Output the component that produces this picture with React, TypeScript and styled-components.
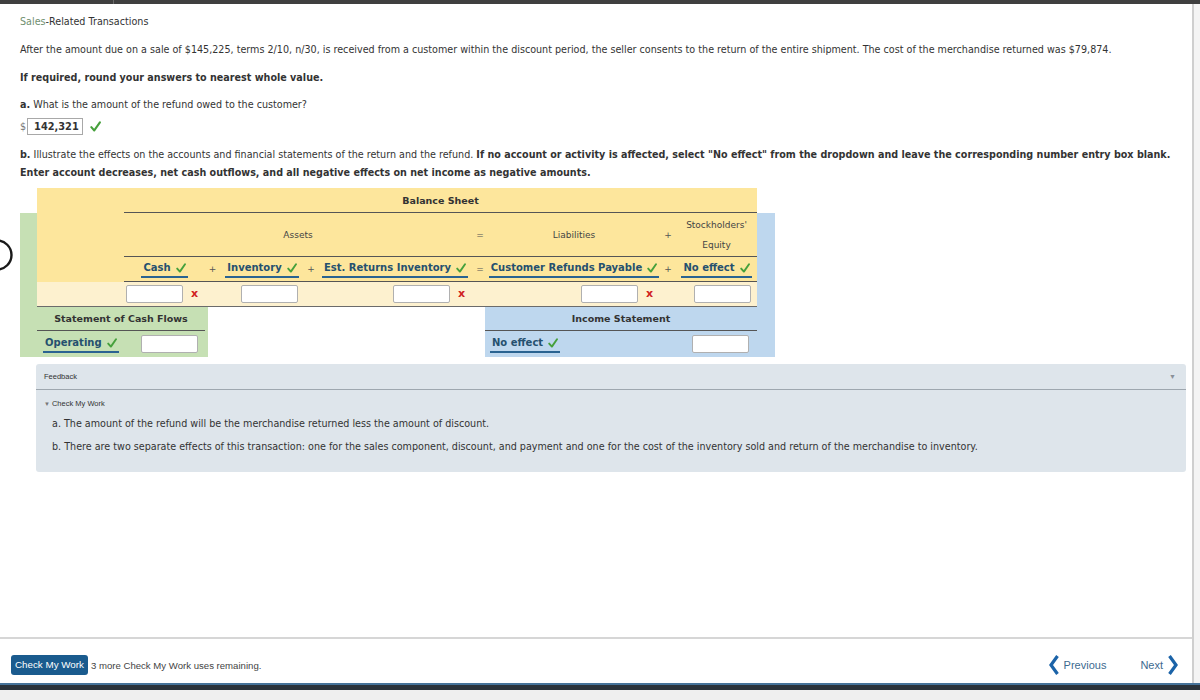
import React from 'react';
import styled, { createGlobalStyle } from 'styled-components';

const GlobalStyle = createGlobalStyle`
    html, body {
        margin: 0;
        padding: 0;
        background: #ffffff;
    }
    body {
        font-family: "DejaVu Sans", Verdana, sans-serif;
        color: #333333;
    }
`;

const BS_COLS = '81px 15px 84px 14px 154px 16px 172px 16px 81px';

const Page = styled.div`
    position: relative;
    width: 1200px;
    height: 700px;
    display: flex;
    flex-direction: column;
    overflow: hidden;
`;

const TopBar = styled.div`
    height: 4px;
    background: #3f3f3f;
    display: flex;
    & > div {
        width: 113px;
        border-right: 1px solid #6a6a6a;
    }
`;

const Main = styled.div`
    flex: 1;
    display: flex;
    min-height: 0;
`;

const Column = styled.div`
    flex: 1;
    display: flex;
    flex-direction: column;
`;

const Gutter = styled.div`
    width: 6px;
    border-left: 2px solid #cfcfcf;
    background: #f4f4f4;
`;

const Content = styled.div`
    flex: 1;
    padding: 9px 0 0 20px;
`;

const Line = styled.div<{ $top?: number; $bold?: boolean }>`
    margin-top: ${p => p.$top ?? 0}px;
    font-size: 9.6px;
    line-height: 18px;
    font-weight: ${p => (p.$bold ? 700 : 400)};
    white-space: nowrap;
    b { font-weight: 700; }
`;

const Green = styled.span`
    color: #6f8f6f;
`;

const AnswerRow = styled.div`
    margin-top: 3px;
    display: flex;
    align-items: center;
    height: 18px;
    font-size: 9.6px;
    color: #777;
`;

const AnswerBox = styled.div`
    margin-left: 1px;
    width: 56px;
    height: 17px;
    box-sizing: border-box;
    border: 1px solid #a8a8a8;
    padding-left: 6px;
    font-weight: 700;
    font-size: 9.8px;
    line-height: 15px;
    color: #333;
`;

const CheckMark = styled.svg<{ $gap: number }>`
    margin-left: ${p => p.$gap}px;
    flex: none;
`;

const Tick: React.FC<{ gap?: number; size?: number }> = ({ gap = 5, size = 10 }) => (
    <CheckMark $gap={gap} width={size} height={size} viewBox="0 0 10 10">
        <path d="M1.2 5.6 L3.9 8.6 L9 1.2" fill="none" stroke="#46a03c" strokeWidth="1.9" strokeLinecap="round" strokeLinejoin="round" />
    </CheckMark>
);

const Worksheet = styled.div`
    margin-top: 6px;
    width: 755px;
    display: grid;
    grid-template-columns: 17px 171px 277px 272px 18px;
    grid-template-rows: 25px 94px 50px;
    grid-template-areas:
        ". bs bs bs ."
        "gl bs bs bs bl"
        "cf cf . is is";
`;

const BalanceSheet = styled.div`
    grid-area: bs;
    background: #fde69c;
    display: flex;
    flex-direction: column;
`;

const GreenStrip = styled.div`
    grid-area: gl;
    background: #c6e0b4;
`;

const BlueStrip = styled.div`
    grid-area: bl;
    background: #bed7ee;
`;

const BsRow = styled.div<{ $h: number; $light?: boolean }>`
    height: ${p => p.$h}px;
    display: grid;
    grid-template-columns: ${BS_COLS};
    margin-left: ${p => (p.$light ? 0 : 87)}px;
    padding-left: ${p => (p.$light ? 87 : 0)}px;
    background: ${p => (p.$light ? '#fdf1cf' : 'transparent')};
    border-bottom: 1px solid ${p => (p.$light ? '#6b6b6b' : '#555')};
    align-items: center;
`;

const SheetTitle = styled.div`
    grid-column: 1 / -1;
    text-align: center;
    font-weight: 700;
    font-size: 9.5px;
    color: #333;
`;

const HeadCell = styled.div<{ $span?: number }>`
    grid-column: span ${p => p.$span ?? 1};
    text-align: center;
    font-size: 9px;
    line-height: 20px;
    color: #444;
`;

const Op = styled.div`
    text-align: center;
    font-size: 9px;
    color: #555;
`;

const LabelCell = styled.div`
    display: flex;
    justify-content: center;
`;

const Select = styled.span`
    display: inline-flex;
    align-items: center;
    height: 14px;
    font-size: 10px;
    font-weight: 700;
    color: #25506f;
    padding: 0 2px 1px;
    border-bottom: 2px solid #2a6391;
    white-space: nowrap;
`;

const InputCell = styled.div`
    display: flex;
    align-items: center;
    justify-content: flex-end;
    padding-right: 6px;
`;

const Field = styled.div`
    width: 57px;
    height: 18px;
    box-sizing: border-box;
    background: #fff;
    border: 1px solid #b0b0b0;
    border-radius: 2px;
`;

const Wrong = styled.span`
    width: 8px;
    margin-left: 8px;
    color: #d0201e;
    font-weight: 700;
    font-size: 11px;
    line-height: 10px;
`;

const SidePanel = styled.div<{ $area: string; $bg: string }>`
    grid-area: ${p => p.$area};
    background: ${p => p.$bg};
    padding: ${p => (p.$area === 'cf' ? '0 3px 0 17px' : '0 18px 0 0')};
    display: flex;
    flex-direction: column;
`;

const PanelHead = styled.div`
    height: 23px;
    border-bottom: 1px solid #555;
    text-align: center;
    font-size: 9.5px;
    font-weight: 700;
    line-height: 23px;
    color: #333;
`;

const PanelRow = styled.div<{ $left: number; $right: number }>`
    flex: 1;
    display: flex;
    align-items: center;
    justify-content: space-between;
    padding: 0 ${p => p.$right}px 0 ${p => p.$left}px;
`;

const Feedback = styled.div`
    margin: 7px 6px 0 16px;
    height: 108px;
    background: #dee5eb;
    border-radius: 3px;
`;

const FeedbackHead = styled.div`
    height: 25px;
    border-bottom: 1px solid #9ea7af;
    display: flex;
    align-items: center;
    justify-content: space-between;
    padding: 0 10px 0 8px;
    font-family: "Liberation Sans", Arial, sans-serif;
    font-size: 7.5px;
    color: #333;
    span { color: #8a9099; font-size: 7px; }
`;

const Toggle = styled.div`
    margin: 9px 0 0 8px;
    font-family: "Liberation Sans", Arial, sans-serif;
    font-size: 7.5px;
    line-height: 10px;
    color: #333;
    span { color: #777; font-size: 6px; margin-right: 2px; }
`;

const Hint = styled.div<{ $top: number }>`
    margin: ${p => p.$top}px 0 0 16px;
    font-size: 9.6px;
    line-height: 18px;
    color: #333;
    white-space: nowrap;
`;

const Footer = styled.div`
    height: 46px;
    box-sizing: border-box;
    border-top: 2px solid #d6d6d6;
    padding: 8px 14px 0 11px;
    display: flex;
    align-items: center;
    font-family: "Liberation Sans", Arial, sans-serif;
`;

const CheckButton = styled.div`
    height: 20px;
    padding: 0 4px;
    border-radius: 3px;
    background: #1a5b8e;
    color: #fff;
    font-size: 9.8px;
    line-height: 20px;
`;

const Remaining = styled.div`
    margin-left: 3px;
    font-size: 9.6px;
    color: #444;
`;

const Nav = styled.div`
    margin-left: auto;
    display: flex;
    align-items: center;
    gap: 34px;
`;

const NavLink = styled.div`
    display: flex;
    align-items: center;
    gap: 5px;
    font-size: 11px;
    color: #3d6a90;
`;

const BottomBar = styled.div`
    height: 7px;
    box-sizing: border-box;
    background: #2b333b;
    border-top: 2px solid #46739a;
`;

const Base = styled.div`
    height: 10px;
    background: #efefef;
`;

const Ring = styled.svg`
    position: absolute;
    left: 0;
    top: 236px;
`;

const Chevron: React.FC<{ dir: 'left' | 'right' }> = ({ dir }) => (
    <svg width="10" height="20" viewBox="0 0 10 20">
        <path
            d={dir === 'left' ? 'M8.5 1 L2 10 L8.5 19' : 'M1.5 1 L8 10 L1.5 19'}
            fill="none"
            stroke="#1b63a8"
            strokeWidth="3.2"
            strokeLinejoin="miter"
        />
    </svg>
);

const Label: React.FC<{ text: string }> = ({ text }) => (
    <Select>
        {text}
        <Tick />
    </Select>
);

const App: React.FC = () => {
    return (
        <Page>
            <GlobalStyle />
            <TopBar><div /></TopBar>
            <Main>
                <Column>
                    <Content>
                        <Line><Green>Sales</Green>-Related Transactions</Line>
                        <Line $top={10}>
                            After the amount due on a sale of $145,225, terms 2/10, n/30, is received from a customer within the discount period, the seller consents to the return of the entire shipment. The cost of the merchandise returned was $79,874.
                        </Line>
                        <Line $top={10} $bold>If required, round your answers to nearest whole value.</Line>
                        <Line $top={9}><b>a.</b> What is the amount of the refund owed to the customer?</Line>
                        <AnswerRow>
                            $<AnswerBox>142,321</AnswerBox>
                            <Tick gap={7} size={11} />
                        </AnswerRow>
                        <Line $top={11}>
                            <b>b.</b> Illustrate the effects on the accounts and financial statements of the return and the refund. <b>If no account or activity is affected, select "No effect" from the dropdown and leave the corresponding number entry box blank.</b>
                        </Line>
                        <Line $bold>Enter account decreases, net cash outflows, and all negative effects on net income as negative amounts.</Line>

                        <Worksheet>
                            <BalanceSheet>
                                <BsRow $h={24}>
                                    <SheetTitle>Balance Sheet</SheetTitle>
                                </BsRow>
                                <BsRow $h={43}>
                                    <HeadCell $span={5}>Assets</HeadCell>
                                    <Op>=</Op>
                                    <HeadCell>Liabilities</HeadCell>
                                    <Op>+</Op>
                                    <HeadCell>Stockholders'<br />Equity</HeadCell>
                                </BsRow>
                                <BsRow $h={24}>
                                    <LabelCell><Label text="Cash" /></LabelCell>
                                    <Op>+</Op>
                                    <LabelCell><Label text="Inventory" /></LabelCell>
                                    <Op>+</Op>
                                    <LabelCell><Label text="Est. Returns Inventory" /></LabelCell>
                                    <Op>=</Op>
                                    <LabelCell><Label text="Customer Refunds Payable" /></LabelCell>
                                    <Op>+</Op>
                                    <LabelCell><Label text="No effect" /></LabelCell>
                                </BsRow>
                                <BsRow $h={24} $light>
                                    <InputCell><Field /><Wrong>x</Wrong></InputCell>
                                    <div />
                                    <InputCell><Field /></InputCell>
                                    <div />
                                    <InputCell><Field /><Wrong>x</Wrong></InputCell>
                                    <div />
                                    <InputCell><Field /><Wrong>x</Wrong></InputCell>
                                    <div />
                                    <InputCell><Field /></InputCell>
                                </BsRow>
                            </BalanceSheet>
                            <GreenStrip />
                            <BlueStrip />
                            <SidePanel $area="cf" $bg="#c6e0b4">
                                <PanelHead>Statement of Cash Flows</PanelHead>
                                <PanelRow $left={6} $right={7}>
                                    <Label text="Operating" />
                                    <Field />
                                </PanelRow>
                            </SidePanel>
                            <SidePanel $area="is" $bg="#bed7ee">
                                <PanelHead>Income Statement</PanelHead>
                                <PanelRow $left={5} $right={8}>
                                    <Label text="No effect" />
                                    <Field />
                                </PanelRow>
                            </SidePanel>
                        </Worksheet>

                        <Feedback>
                            <FeedbackHead>Feedback<span>▼</span></FeedbackHead>
                            <Toggle><span>▼</span>Check My Work</Toggle>
                            <Hint $top={6}>a. The amount of the refund will be the merchandise returned less the amount of discount.</Hint>
                            <Hint $top={5}>b. There are two separate effects of this transaction: one for the sales component, discount, and payment and one for the cost of the inventory sold and return of the merchandise to inventory.</Hint>
                        </Feedback>
                    </Content>
                    <Footer>
                        <CheckButton>Check My Work</CheckButton>
                        <Remaining>3 more Check My Work uses remaining.</Remaining>
                        <Nav>
                            <NavLink><Chevron dir="left" />Previous</NavLink>
                            <NavLink>Next<Chevron dir="right" /></NavLink>
                        </Nav>
                    </Footer>
                </Column>
                <Gutter />
            </Main>
            <BottomBar />
            <Base />
            <Ring width="16" height="40" viewBox="0 0 16 40">
                <circle cx="-3" cy="19" r="14.5" fill="none" stroke="#1a1a1a" strokeWidth="2.4" />
            </Ring>
        </Page>
    );
};

export default App;
